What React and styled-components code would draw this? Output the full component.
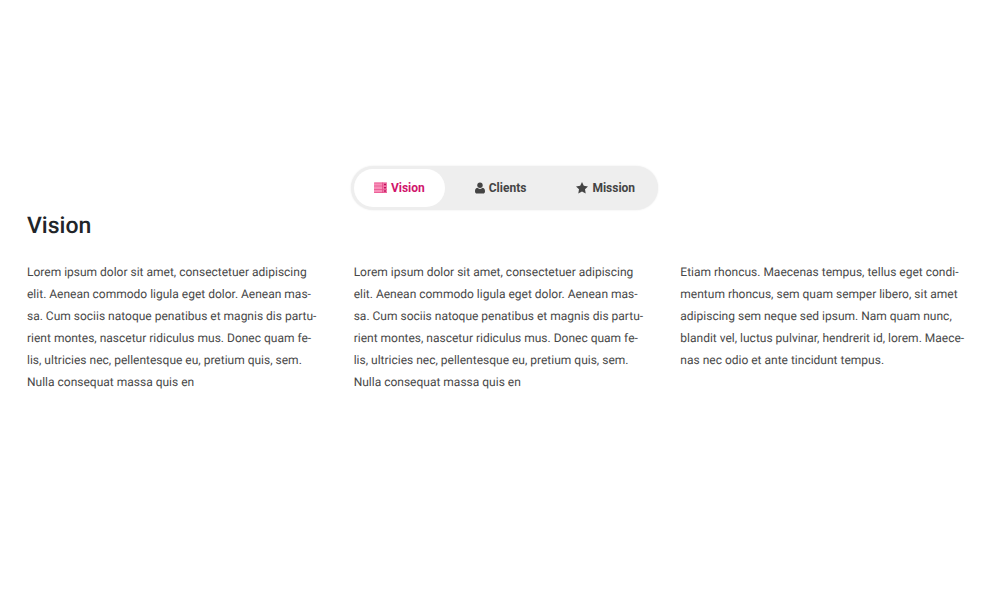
import React, { useState } from "react";
import styled, { createGlobalStyle } from "styled-components";

const GlobalStyle = createGlobalStyle`
  *, *::before, *::after { box-sizing: border-box; }
  body {
    margin: 0;
    background: #fff;
    color: #484848;
    font-family: Roboto, "Liberation Sans", sans-serif;
    text-rendering: geometricPrecision;
  }
`;

const Page = styled.main`
  padding: 166px 18px 40px 27px;
`;

const TabList = styled.div`
  display: flex;
  width: fit-content;
  margin: 0 auto;
  gap: 10px;
  padding: 3px;
  border-radius: 22px;
  background: #eee;
  box-shadow: 0 0 2px #e8e8e8;
`;

const Tab = styled.button`
  display: flex;
  align-items: center;
  gap: 4px;
  height: 38px;
  padding: 0 20px;
  border: 0;
  border-radius: 19px;
  background: ${(p) => (p.$active ? "#fff" : "transparent")};
  color: ${(p) => (p.$active ? "#d0146c" : "#444")};
  font: 700 12px/20px Roboto, "Liberation Sans", sans-serif;
  cursor: pointer;
`;

const Icon = styled.svg`
  flex: none;
  height: 12px;
`;

const Title = styled.h2`
  margin: 0 0 19px;
  color: #212529;
  font-size: 23px;
  line-height: 32px;
  font-weight: 500;
`;

const Columns = styled.div`
  display: grid;
  grid-template-columns: repeat(3, minmax(0, 1fr));
  gap: 25px;
`;

const Text = styled.p`
  margin: 0;
  padding-right: 8px;
  font-size: 12px;
  line-height: 22px;
  hyphens: manual;
`;

const ServerIcon = () => (
  <Icon width="13" viewBox="0 0 13 12" aria-hidden="true">
    <rect x="0" y="0.5" width="13" height="10.5" rx="1" fill="#f78fb8" />
    <path d="M0 1h13M0 4h13M0 7.5h13M0 10.5h13" stroke="#e8548f" strokeWidth=".8" />
    <path d="M8.5 .5v10.5" stroke="#e54b8c" strokeWidth=".8" />
    <path d="M9.8 2.5h2.4M9.8 5.8h2.4M9.8 9h2.4" stroke="#c00f5c" strokeWidth="1.5" />
  </Icon>
);

const UserIcon = () => (
  <Icon width="10" viewBox="0 0 10 12" fill="currentColor" aria-hidden="true">
    <circle cx="5" cy="3.3" r="2.7" />
    <path d="M2.3 5.8C.6 6.1 0 7.6 0 9.4 0 10.6.8 11.5 1.9 11.5h6.2c1.1 0 1.9-.9 1.9-2.1 0-1.8-.6-3.3-2.3-3.6A3.8 3.8 0 0 1 5 6.9a3.8 3.8 0 0 1-2.7-1.1Z" />
  </Icon>
);

const StarIcon = () => (
  <Icon width="12" viewBox="0 0 12 12" fill="currentColor" aria-hidden="true">
    <path d="m6 0 1.8 3.8 4.2.6-3 2.9.7 4.1L6 9.5l-3.7 1.9.7-4.1-3-2.9 4.2-.6Z" />
  </Icon>
);

const lorem =
  "Lorem ipsum dolor sit amet, consectetuer adipiscing elit. Aenean commodo ligula eget dolor. Aenean mas\u00adsa. Cum sociis natoque penatibus et magnis dis partu\u00adrient montes, nascetur ridiculus mus. Donec quam fe\u00adlis, ultricies nec, pellentesque eu, pretium quis, sem. Nulla consequat massa quis en";

const etiam =
  "Etiam rhoncus. Maecenas tempus, tellus eget condi\u00admentum rhoncus, sem quam semper libero, sit amet adipiscing sem neque sed ipsum. Nam quam nunc, blandit vel, luctus pulvinar, hendrerit id, lorem. Maece\u00adnas nec odio et ante tincidunt tempus.";

const tabs = [
  { name: "Vision", Glyph: ServerIcon },
  { name: "Clients", Glyph: UserIcon },
  { name: "Mission", Glyph: StarIcon },
];

export default function App() {
  const [active, setActive] = useState("Vision");
  return (
    <>
      <GlobalStyle />
      <Page>
        <TabList role="tablist">
          {tabs.map(({ name, Glyph }) => (
            <Tab
              key={name}
              type="button"
              role="tab"
              id={`tab-${name}`}
              aria-controls="panel"
              aria-selected={active === name}
              $active={active === name}
              onClick={() => setActive(name)}
            >
              <Glyph />
              {name}
            </Tab>
          ))}
        </TabList>
        <section id="panel" role="tabpanel" aria-labelledby={`tab-${active}`}>
          <Title>{active}</Title>
          <Columns>
            {[lorem, lorem, etiam].map((text, i) => (
              <Text key={i}>{text}</Text>
            ))}
          </Columns>
        </section>
      </Page>
    </>
  );
}
